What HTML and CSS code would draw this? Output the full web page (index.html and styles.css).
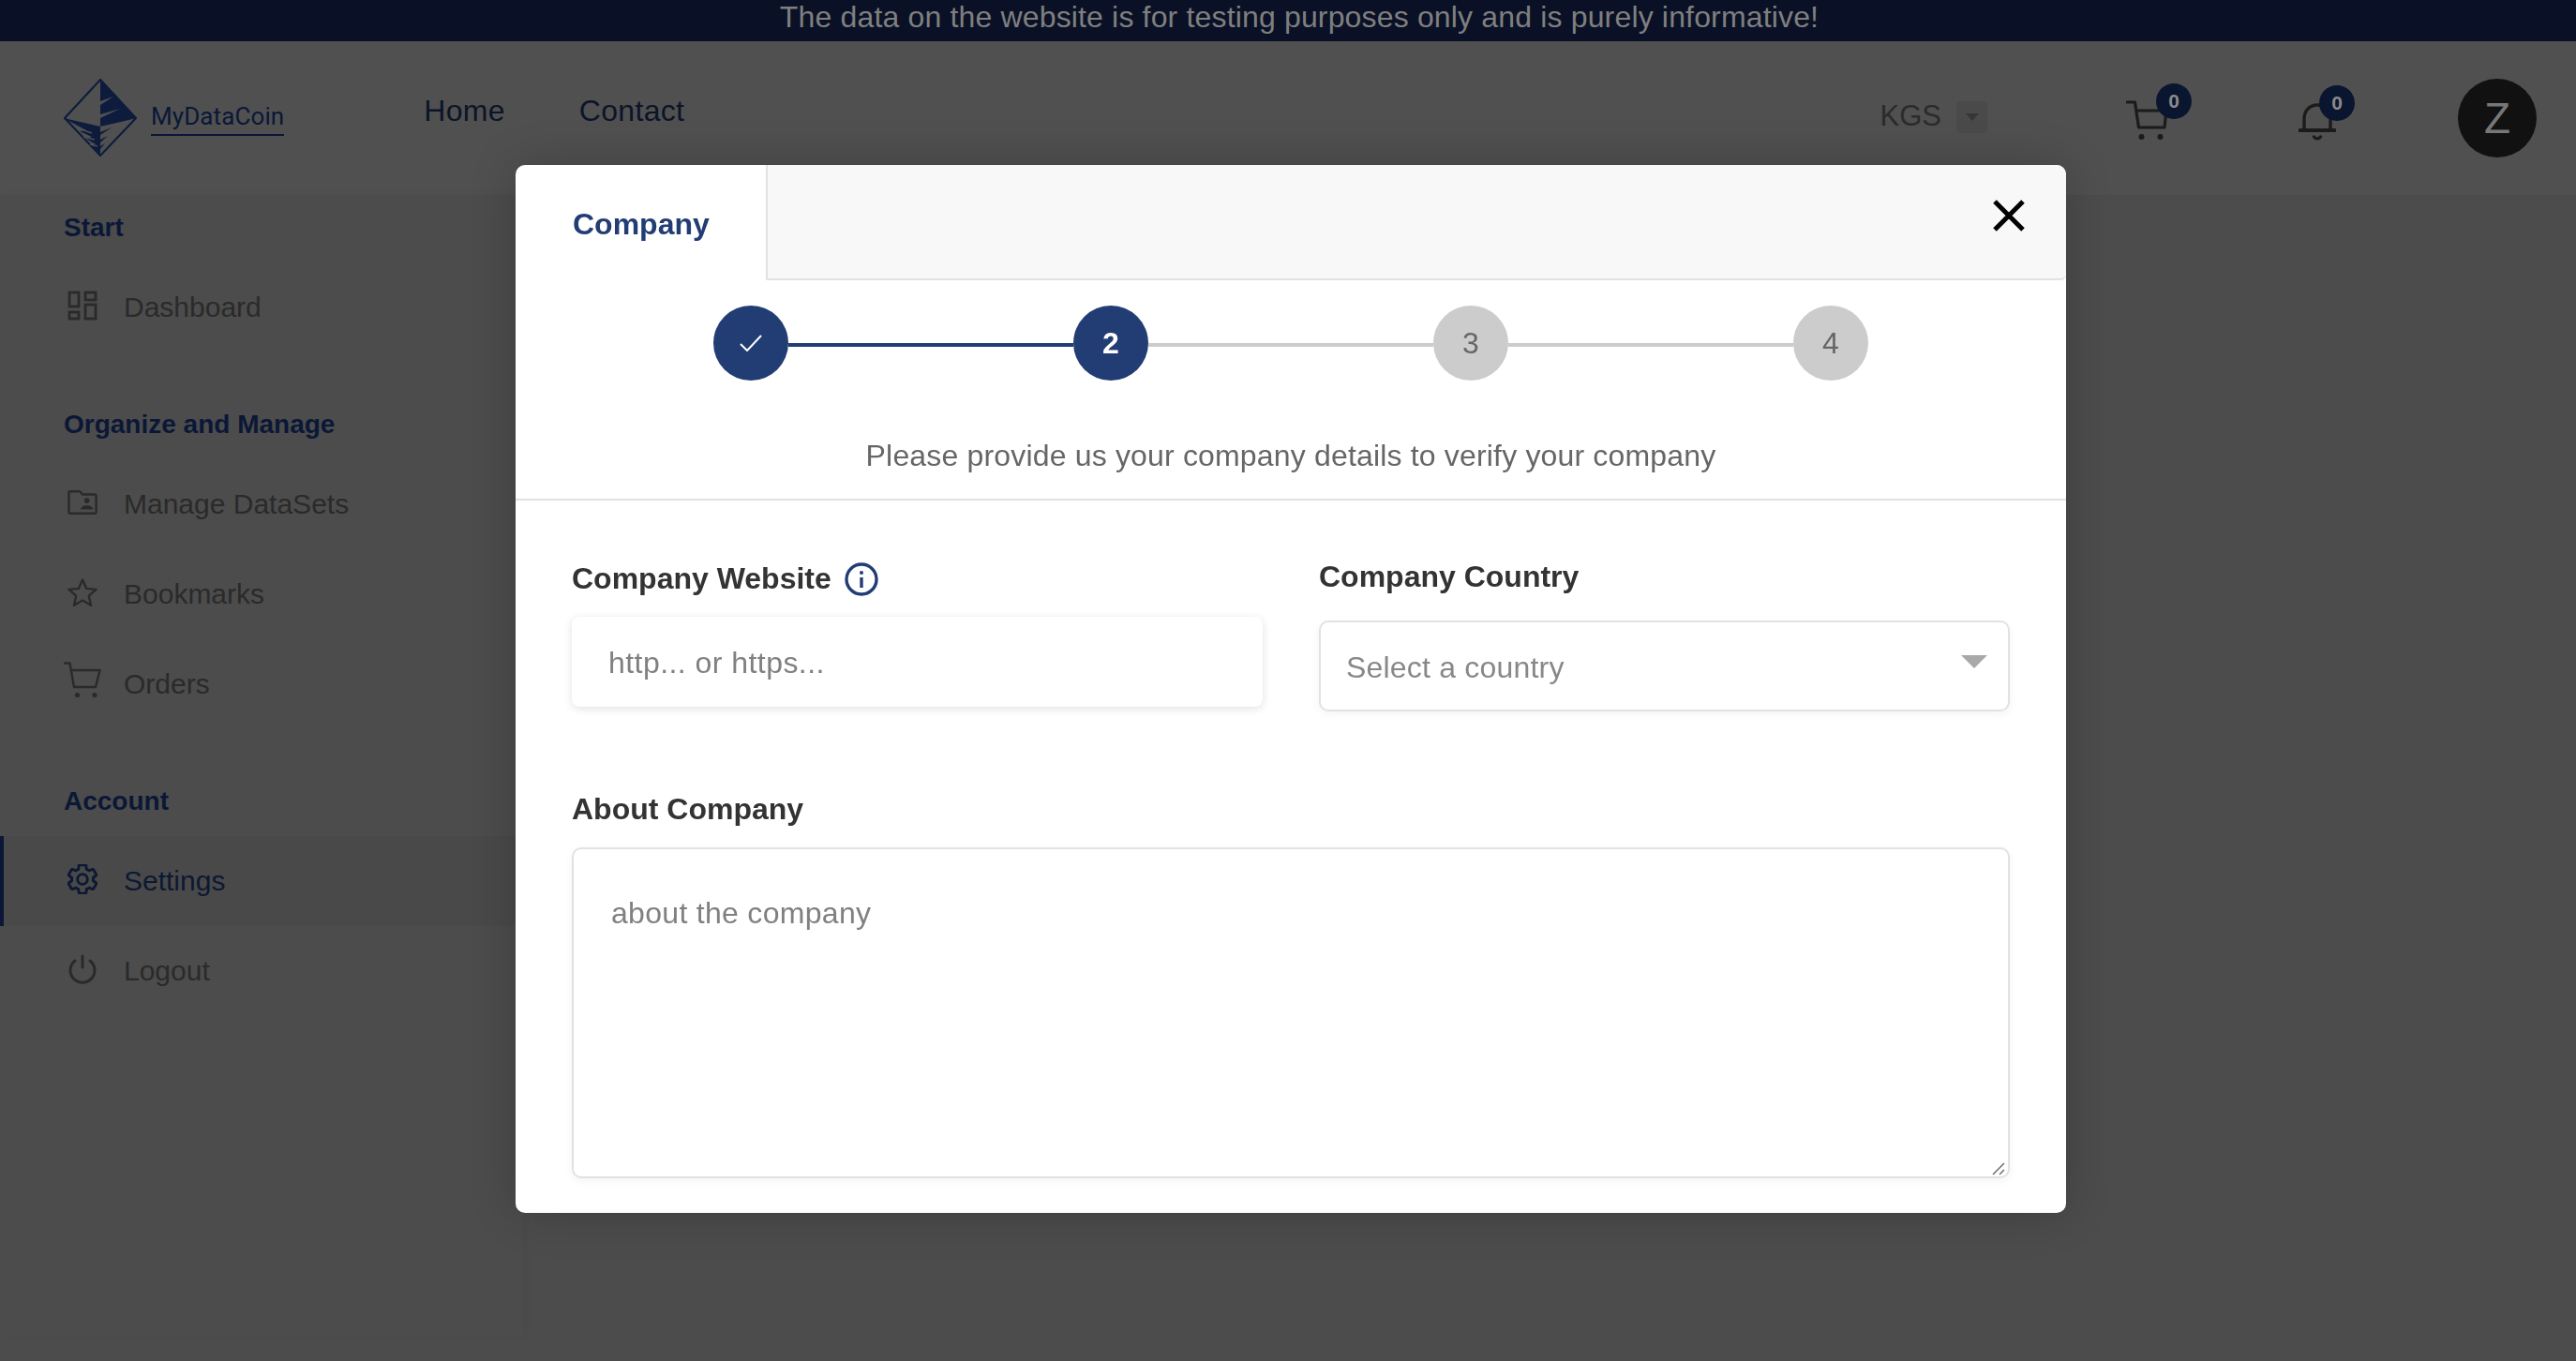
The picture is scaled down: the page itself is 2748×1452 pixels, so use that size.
FILE: index.html
```html
<!DOCTYPE html>
<html lang="en">

<head>
    <meta charset="UTF-8">
    <meta name="viewport" content="width=device-width, initial-scale=1.0">
    <title>MyDataCoin - Settings</title>
    <link rel="stylesheet" href="styles.css">
</head>

<body>
    <div class="banner">The data on the website is for testing purposes only and is purely informative!</div>

    <header class="topbar">
        <a class="logo">
            <svg class="logo-mark" viewBox="0 0 78 83">
                <path d="M39 1 77 42 39 82 1 42Z" fill="none" stroke="#0d1b3d" stroke-width="2" />
                <path d="M39 0 78 42 39 51Z" fill="#0d1b3d" />
                <path d="M39 24 53 19 39 28ZM39 38 60 32 39 42Z" fill="#505050" />
                <path d="M0 42 39 51V83L34 77 28 72 34 70 24 64 30 62 17 56 24 55Z" fill="#0d1b3d" />
                <path d="M39 57 51 52 39 60ZM39 65 47 61 39 68ZM39 72 44 69 39 75Z" fill="#0d1b3d" />
                <path d="M15 53 30 58M21 62 33 65M28 70 36 72" stroke="#505050" stroke-width="1.5" />
            </svg>
            <span class="logo-text">MyDataCoin</span>
        </a>
        <nav class="main-nav">
            <a>Home</a>
            <a>Contact</a>
        </nav>
        <div class="currency">
            <span>KGS</span>
            <span class="currency-btn"><i></i></span>
        </div>
        <div class="top-icon cart-icon">
            <svg width="46" height="43" viewBox="0 0 46 43" fill="none" stroke="#1b1b1b" stroke-width="3.2" stroke-linecap="round" stroke-linejoin="round">
                <path d="M1 2H9.500L13.500 29H41L43 11H11" />
                <circle cx="16.500" cy="39" r="3" fill="#1b1b1b" stroke="none" />
                <circle cx="36.500" cy="39" r="3" fill="#1b1b1b" stroke="none" />
            </svg>
            <span class="badge">0</span>
        </div>
        <div class="top-icon bell-icon">
            <svg width="40" height="40" viewBox="0 0 40 40" fill="none" stroke="#1b1b1b" stroke-width="3.4" stroke-linecap="round" stroke-linejoin="round">
                <path d="M6 28V17C6 8 12 2 20 2S34 8 34 17V28" />
                <path d="M1.500 29H38.500" stroke-width="4" />
                <path d="M16.500 36C18 38.500 22 38.500 23.500 36" />
            </svg>
            <span class="badge">0</span>
        </div>
        <div class="avatar">Z</div>
    </header>

    <aside class="sidebar">
        <div class="side-group">
            <h4>Start</h4>
            <a class="side-item">
                <svg viewBox="0 0 32 32" fill="none" stroke="#2a2a2a" stroke-width="2.800">
                    <rect x="2" y="2" width="10" height="15" />
                    <rect x="19" y="2" width="11" height="8" />
                    <rect x="2" y="23" width="10" height="7" />
                    <rect x="19" y="15" width="11" height="15" />
                </svg>
                Dashboard
            </a>
        </div>
        <div class="side-group">
            <h4>Organize and Manage</h4>
            <a class="side-item">
                <svg viewBox="0 0 34 28" fill="none" stroke="#2a2a2a" stroke-width="2.600" stroke-linejoin="round">
                    <path d="M1.500 3A1.500 1.500 0 0 1 3 1.500H14L17 5H31A1.500 1.500 0 0 1 32.500 6.500V25A1.500 1.500 0 0 1 31 26.500H3A1.500 1.500 0 0 1 1.500 25Z" />
                    <circle cx="22" cy="12" r="3" fill="#2a2a2a" stroke="none" />
                    <path d="M15 22C15 16 29 16 29 22Z" fill="#2a2a2a" stroke="none" />
                </svg>
                Manage DataSets
            </a>
            <a class="side-item">
                <svg viewBox="0 0 32 31" fill="none" stroke="#2a2a2a" stroke-width="2.400" stroke-linejoin="round">
                    <path d="M16 2 20.200 11.400 30.500 12.400 22.800 19.200 25 29.300 16 24 7 29.300 9.200 19.200 1.500 12.400 11.800 11.400Z" />
                </svg>
                Bookmarks
            </a>
            <a class="side-item">
                <svg class="orders-svg" viewBox="0 0 40 39" fill="none" stroke="#2a2a2a" stroke-width="2.400" stroke-linecap="round" stroke-linejoin="round">
                    <path d="M1 1.500H6.500L11 27H34L38.500 9H8" />
                    <circle cx="14.500" cy="35.500" r="2.600" fill="#2a2a2a" stroke="none" />
                    <circle cx="33" cy="35.500" r="2.600" fill="#2a2a2a" stroke="none" />
                </svg>
                Orders
            </a>
        </div>
        <div class="side-group">
            <h4>Account</h4>
            <a class="side-item active">
                <svg viewBox="1.500 1.500 21 21" fill="none" stroke="#0d1833" stroke-width="1.900">
                    <path d="M19.430 12.980c.04-.32.07-.64.07-.98 0-.34-.03-.66-.07-.98l2.110-1.650c.19-.15.24-.42.12-.64l-2-3.460c-.09-.16-.26-.25-.44-.25-.06 0-.12.01-.17.03l-2.490 1c-.52-.4-1.080-.73-1.690-.98l-.38-2.650C14.460 2.180 14.250 2 14 2h-4c-.25 0-.46.18-.49.42l-.38 2.650c-.61.25-1.170.59-1.690.98l-2.490-1c-.06-.02-.12-.03-.18-.03-.17 0-.34.09-.43.25l-2 3.460c-.13.22-.07.49.12.64l2.110 1.650c-.04.32-.07.65-.07.98 0 .33.03.66.07.98l-2.110 1.650c-.19.15-.24.42-.12.64l2 3.460c.09.16.26.25.44.25.06 0 .12-.01.17-.03l2.490-1c.52.4 1.080.73 1.690.98l.38 2.650c.03.24.24.42.49.42h4c.25 0 .46-.18.49-.42l.38-2.650c.61-.25 1.170-.59 1.690-.98l2.490 1c.06.02.12.03.18.03.17 0 .34-.09.43-.25l2-3.460c.12-.22.07-.49-.12-.64l-2.110-1.650z" />
                    <circle cx="12" cy="12" r="3.500" />
                </svg>
                Settings
            </a>
            <a class="side-item">
                <svg viewBox="0 0 32 32" fill="none" stroke="#2a2a2a" stroke-width="3" stroke-linecap="round">
                    <path d="M16 2V14" />
                    <path d="M8 7A13 13 0 1 0 24 7" />
                </svg>
                Logout
            </a>
        </div>
    </aside>

    <!-- company modal, step 2 -->
    <div class="modal">
        <div class="modal-tabs">
            <div class="tab">Company</div>
            <div class="tab-rest">
                <svg class="close-icon" viewBox="0 0 34 34" stroke="#000" stroke-width="5">
                    <path d="M2 2 32 32M32 2 2 32" />
                </svg>
            </div>
        </div>

        <div class="modal-head">
            <div class="stepper">
                <span class="step done">
                    <svg width="24" height="18" viewBox="0 0 24 18" fill="none" stroke="#fff" stroke-width="2">
                        <path d="M1 10 8 17 23 1" />
                    </svg>
                </span>
                <span class="step-line done"></span>
                <span class="step current">2</span>
                <span class="step-line"></span>
                <span class="step">3</span>
                <span class="step-line"></span>
                <span class="step">4</span>
            </div>
            <p class="step-text">Please provide us your company details to verify your company</p>
        </div>

        <form class="modal-form">
            <div class="form-row">
                <div class="field website-field">
                    <label>
                        Company Website
                        <svg class="info-icon" width="36" height="36" viewBox="0 0 36 36" fill="none" stroke="#223c76" stroke-width="3.400">
                            <circle cx="18" cy="18" r="16" />
                            <circle cx="18" cy="11" r="2" fill="#223c76" stroke="none" />
                            <path d="M18 16V27" />
                        </svg>
                    </label>
                    <input class="text-input" type="text" placeholder="http... or https...">
                </div>
                <div class="field country-field">
                    <label>Company Country</label>
                    <div class="select-box">
                        <span>Select a country</span>
                        <i></i>
                    </div>
                </div>
            </div>
            <label class="about-label">About Company</label>
            <div class="about-wrap">
                <textarea class="about-input" placeholder="about the company"></textarea>
                <svg class="resize-grip" width="14" height="14" viewBox="0 0 14 14" stroke="#6e6e6e" stroke-width="1.500">
                    <path d="M1 13 13 1M8 13 13 8" />
                </svg>
            </div>
        </form>
    </div>
</body>

</html>
```

FILE: styles.css
```css
:root {
    --azul: #223c74;
    --azul-dim: #0b1736;
    --texto-dim: #2a2a2a;
    --borde: #e2e2e2;
    --placeholder: #808080;
}

* {
    box-sizing: border-box;
}

body {
    margin: 0;
    height: 1452px;
    overflow: hidden;
    background-color: #4c4c4c;
    font-family: 'Liberation Sans', Arial, sans-serif;
    font-size: 32px;
}

.banner {
    height: 44px;
    padding-left: 24px;
    overflow: hidden;
    background-color: #0a1126;
    color: #7f7f7f;
    font-size: 32px;
    letter-spacing: 0.16px;
    line-height: 36px;
    text-align: center;
}

/* Top bar */
.topbar {
    display: flex;
    align-items: flex-start;
    height: 164px;
    padding-left: 68px;
    background-color: #505050;
}

.logo {
    display: flex;
    align-items: flex-start;
    margin-top: 40px;
}

.logo-mark {
    width: 78px;
    height: 83px;
}

.logo-text {
    margin-top: 25px;
    margin-left: 15px;
    padding-bottom: 4px;
    border-bottom: 2.500px solid var(--azul-dim);
    color: var(--azul-dim);
    font-family: Roboto, sans-serif;
    font-size: 26px;
    letter-spacing: 0.1px;
    line-height: 30px;
}

.main-nav {
    display: flex;
    gap: 79px;
    margin-top: 54px;
    margin-left: 149px;
    color: #0c1428;
    letter-spacing: 0.3px;
    line-height: 40px;
}

.currency {
    display: flex;
    align-items: flex-start;
    gap: 16px;
    margin-top: 60px;
    margin-left: auto;
    color: #2b2b2b;
    font-size: 31px;
    line-height: 40px;
}

.currency-btn {
    display: flex;
    align-items: center;
    justify-content: center;
    width: 33px;
    height: 34px;
    margin-top: 4px;
    border-radius: 4px;
    background-color: #4a4a4a;
}

.currency-btn i {
    border-top: 8px solid #363636;
    border-left: 7px solid transparent;
    border-right: 7px solid transparent;
}

.top-icon {
    position: relative;
}

.top-icon svg {
    display: block;
}

.cart-icon {
    margin-top: 63px;
    margin-left: 148px;
}

.bell-icon {
    margin-top: 66px;
    margin-left: 138px;
}

.badge {
    position: absolute;
    width: 38px;
    height: 38px;
    border-radius: 50%;
    background-color: #0a1530;
    color: #8a8a8a;
    font-size: 21px;
    font-weight: bold;
    line-height: 38px;
    text-align: center;
}

.cart-icon .badge {
    top: -18px;
    left: 32px;
}

.bell-icon .badge {
    top: -19px;
    left: 22px;
}

.avatar {
    width: 84px;
    height: 84px;
    margin-top: 40px;
    margin-left: 130px;
    margin-right: 42px;
    border-radius: 50%;
    background-color: #111;
    color: #777;
    font-size: 46px;
    line-height: 84px;
    text-align: center;
}

/* Sidebar */
.sidebar {
    width: 558px;
    height: 1218px;
    padding-top: 15px;
    box-shadow: 2px 0 8px rgba(0, 0, 0, 0.04);
}

.side-group {
    margin-bottom: 57px;
}

.side-group h4 {
    margin: 0 0 17px;
    padding-left: 68px;
    color: var(--azul-dim);
    font-size: 28px;
    line-height: 40px;
}

.side-item {
    position: relative;
    display: flex;
    align-items: center;
    height: 96px;
    padding-left: 132px;
    color: var(--texto-dim);
    font-size: 30px;
}

.side-item svg {
    position: absolute;
    left: 72px;
    top: 30px;
    width: 32px;
    height: 32px;
}

.side-item .orders-svg {
    left: 68px;
    top: 24px;
    width: 40px;
    height: 39px;
}

.side-item.active {
    border-left: 4px solid var(--azul-dim);
    padding-left: 128px;
    background-color: #494949;
    color: #0d1833;
}

.side-item.active svg {
    left: 68px;
}

/* Modal */
.modal {
    position: fixed;
    top: 176px;
    left: 550px;
    width: 1654px;
    overflow: hidden;
    border-radius: 10px;
    background-color: #fff;
    box-shadow: 0 0 50px rgba(0, 0, 0, 0.2);
}

.modal-tabs {
    display: flex;
    height: 123px;
}

.tab {
    display: flex;
    align-items: center;
    width: 267px;
    padding-top: 4px;
    padding-left: 61px;
    color: var(--azul);
    font-weight: bold;
}

.tab-rest {
    display: flex;
    flex: 1;
    justify-content: flex-end;
    align-items: flex-start;
    border-left: 2px solid var(--borde);
    border-bottom: 2px solid var(--borde);
    border-bottom-right-radius: 6px;
    background-color: #f8f8f8;
}

.close-icon {
    width: 34px;
    height: 34px;
    margin-top: 37px;
    margin-right: 44px;
}

.modal-head {
    padding-top: 27px;
    padding-bottom: 26px;
    border-bottom: 2px solid var(--borde);
}

.stepper {
    display: flex;
    align-items: center;
    justify-content: center;
}

.step {
    display: flex;
    align-items: center;
    justify-content: center;
    width: 80px;
    height: 80px;
    border-radius: 50%;
    background-color: #ccc;
    color: #666;
}

.step.done,
.step.current {
    background-color: var(--azul);
    color: #fff;
    font-weight: bold;
}

.step-line {
    width: 304px;
    height: 4px;
    margin-top: 4px;
    background-color: #ccc;
}

.step-line.done {
    background-color: var(--azul);
}

.step-text {
    margin: 60px 0 0;
    color: #666;
    letter-spacing: 0.17px;
    line-height: 40px;
    text-align: center;
}

.modal-form {
    padding: 61px 60px 37px;
}

.form-row {
    display: grid;
    grid-template-columns: 737px 737px;
    gap: 60px;
    margin-bottom: 84px;
}

label {
    display: block;
    color: #333;
    font-weight: bold;
    line-height: 40px;
}

.info-icon {
    margin-left: 5px;
    vertical-align: -8px;
}

.website-field {
    padding-top: 2px;
}

.website-field label {
    margin-bottom: 21px;
}

.country-field label {
    margin-bottom: 27px;
}

.text-input {
    display: block;
    width: 100%;
    height: 96px;
    padding: 2px 39px 0;
    border: none;
    border-radius: 8px;
    outline: none;
    box-shadow: 0 2px 10px rgba(0, 0, 0, 0.12);
    font-family: inherit;
    font-size: 32px;
    letter-spacing: 0.45px;
}

.text-input::placeholder,
.about-input::placeholder {
    color: var(--placeholder);
    opacity: 1;
}

.select-box {
    display: flex;
    align-items: center;
    justify-content: space-between;
    height: 97px;
    padding: 3px 22px 0 27px;
    border: 2px solid var(--borde);
    border-radius: 10px;
    box-shadow: 0 3px 10px rgba(0, 0, 0, 0.05);
    color: #888;
    letter-spacing: 0.2px;
}

.select-box i {
    margin-top: -12px;
    border-top: 14px solid #a9a9a9;
    border-left: 14px solid transparent;
    border-right: 14px solid transparent;
}

.about-label {
    margin-bottom: 21px;
}

.about-wrap {
    position: relative;
}

.about-input {
    display: block;
    width: 100%;
    height: 353px;
    padding: 48px 40px;
    border: 2px solid var(--borde);
    border-radius: 10px;
    outline: none;
    resize: none;
    box-shadow: 0 3px 10px rgba(0, 0, 0, 0.05);
    font-family: inherit;
    font-size: 32px;
    letter-spacing: 0.3px;
    line-height: 40px;
}

.resize-grip {
    position: absolute;
    right: 5px;
    bottom: 3px;
}
```
